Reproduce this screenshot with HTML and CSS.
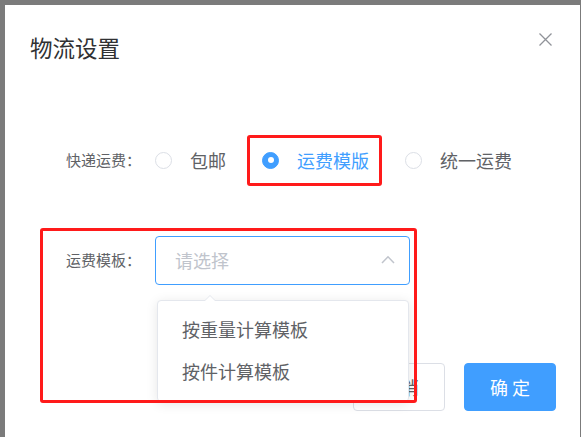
FILE: index.html
```html
<!DOCTYPE html>
<html lang="zh">
<head>
<meta charset="utf-8">
<link rel="stylesheet" href="styles.css">
</head>
<body>
<div class="backdrop">
  <div class="dialog">
    <div class="header">
      <span class="title">物流设置</span>
      <span class="close" aria-label="关闭">
        <svg width="13" height="13" viewBox="0 0 13 13"><path d="M0.5 0.5 L12.5 12.5 M12.5 0.5 L0.5 12.5" stroke="#909399" stroke-width="1.3" fill="none"/></svg>
      </span>
    </div>
    <div class="form">
      <div class="row">
        <label class="label">快递运费：</label>
        <div class="radios">
          <span class="radio"><span class="circle"></span><span class="rtext">包邮</span></span>
          <span class="radio checked"><span class="circle"></span><span class="rtext">运费模版</span></span>
          <span class="radio"><span class="circle"></span><span class="rtext">统一运费</span></span>
        </div>
      </div>
      <div class="row row2">
        <label class="label">运费模板：</label>
        <div class="select">
          <span class="placeholder">请选择</span>
          <svg class="arrow" width="14" height="9" viewBox="0 0 14 9"><path d="M1 8 L7 1.8 L13 8" stroke="#c0c4cc" stroke-width="1.5" fill="none"/></svg>
          <div class="dropdown">
            <span class="caret"></span>
            <div class="item">按重量计算模板</div>
            <div class="item">按件计算模板</div>
          </div>
        </div>
      </div>
    </div>
    <div class="footer">
      <button class="btn">取 消</button>
      <button class="btn primary">确 定</button>
    </div>
    <div class="mark mark1"></div>
    <div class="mark mark2"></div>
  </div>
</div>
</body>
</html>
```
FILE: styles.css
```css
html, body {
  margin: 0;
  padding: 0;
  height: 100%;
  overflow: hidden;
}
body {
  background: #7b7b7b;
  font-family: "Noto Sans CJK SC", "Noto Sans", sans-serif;
}
.backdrop {
  padding: 5px 1px 0 5px;
}
.dialog {
  position: relative;
  background: #fff;
  width: 575px;
  height: 450px;
  box-sizing: border-box;
}
.header {
  display: flex;
  justify-content: space-between;
  align-items: flex-start;
  padding: 30px 28px 0 25px;
}
.title {
  font-size: 22.5px;
  line-height: 24px;
  color: #303133;
}
.close {
  display: block;
  width: 13px;
  height: 13px;
  margin-top: -2px;
}
.close svg { display: block; }
.form {
  padding: 76px 0 0 61px;
}
.row {
  display: flex;
  align-items: center;
  height: 50px;
}
.row2 {
  margin-top: 50px;
}
.label {
  width: 89px;
  font-size: 15px;
  color: #606266;
  line-height: 20px;
}
.radios {
  display: flex;
  align-items: center;
}
.radio {
  display: flex;
  align-items: center;
  margin-right: 36px;
}
.circle {
  width: 17px;
  height: 17px;
  box-sizing: border-box;
  border: 1px solid #dcdfe6;
  border-radius: 50%;
  background: #fff;
  position: relative;
}
.rtext {
  padding-left: 18px;
  font-size: 18px;
  line-height: 24px;
  color: #606266;
}
.checked .circle {
  background: #409eff;
  border-color: #409eff;
}
.checked .circle::after {
  content: "";
  position: absolute;
  left: 50%;
  top: 50%;
  width: 6px;
  height: 6px;
  margin: -3px 0 0 -3px;
  border-radius: 50%;
  background: #fff;
}
.checked .rtext {
  color: #409eff;
}
.select {
  position: relative;
  width: 255px;
  height: 49px;
  box-sizing: border-box;
  border: 1px solid #409eff;
  border-radius: 4px;
  display: flex;
  align-items: center;
  justify-content: space-between;
  padding: 0 14px 0 19px;
}
.placeholder {
  font-size: 18px;
  color: #c0c4cc;
  line-height: 24px;
}
.arrow {
  display: block;
  margin-top: -1px;
}
.dropdown {
  position: absolute;
  left: 1px;
  top: 63px;
  width: 252px;
  box-sizing: border-box;
  background: #fff;
  border: 1px solid #e4e7ed;
  border-radius: 4px;
  box-shadow: 0 2px 12px rgba(0, 0, 0, 0.1);
  padding: 7px 0 9px;
  z-index: 2;
}
.caret {
  position: absolute;
  top: -6px;
  left: 46px;
  width: 0;
  height: 0;
  border-left: 6px solid transparent;
  border-right: 6px solid transparent;
  border-bottom: 6px solid #e4e7ed;
}
.caret::after {
  content: "";
  position: absolute;
  left: -5px;
  top: 1px;
  border-left: 5px solid transparent;
  border-right: 5px solid transparent;
  border-bottom: 5px solid #fff;
}
.item {
  height: 42px;
  line-height: 42px;
  padding-left: 24px;
  font-size: 18px;
  color: #606266;
}
.footer {
  display: flex;
  justify-content: flex-end;
  gap: 19px;
  padding: 78px 24px 0 0;
}
.btn {
  width: 92px;
  height: 48px;
  box-sizing: border-box;
  border: 1px solid #dcdfe6;
  border-radius: 4px;
  background: #fff;
  color: #606266;
  font-family: "Noto Sans CJK SC", "Noto Sans", sans-serif;
  font-size: 18px;
  padding: 0;
}
.btn.primary {
  background: #409eff;
  border-color: #409eff;
  color: #fff;
}
.mark {
  position: absolute;
  border: 3px solid #ff1a1a;
  border-radius: 3px;
  box-sizing: border-box;
  z-index: 3;
}
.mark1 {
  left: 242px;
  top: 130px;
  width: 135px;
  height: 51px;
}
.mark2 {
  left: 35px;
  top: 223px;
  width: 377px;
  height: 175px;
}
```
